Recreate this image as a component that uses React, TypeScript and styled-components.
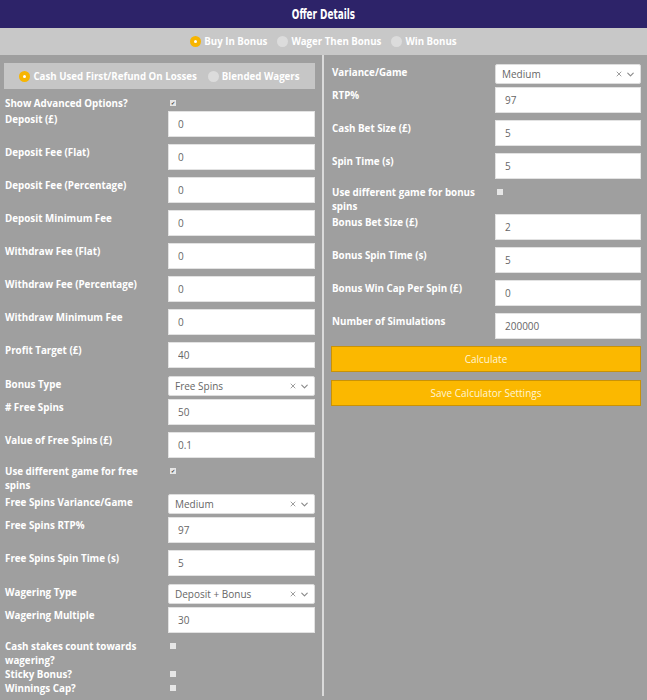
import React from "react";
import styled, { createGlobalStyle } from "styled-components";
import { X, ChevronDown } from "lucide-react";

type Field =
    | { kind: "input"; label: string; value: string }
    | { kind: "select"; label: string; value: string }
    | { kind: "check"; label: string; checked?: boolean };

const leftFields: Field[] = [
    { kind: "check", label: "Show Advanced Options?", checked: true },
    { kind: "input", label: "Deposit (£)", value: "0" },
    { kind: "input", label: "Deposit Fee (Flat)", value: "0" },
    { kind: "input", label: "Deposit Fee (Percentage)", value: "0" },
    { kind: "input", label: "Deposit Minimum Fee", value: "0" },
    { kind: "input", label: "Withdraw Fee (Flat)", value: "0" },
    { kind: "input", label: "Withdraw Fee (Percentage)", value: "0" },
    { kind: "input", label: "Withdraw Minimum Fee", value: "0" },
    { kind: "input", label: "Profit Target (£)", value: "40" },
    { kind: "select", label: "Bonus Type", value: "Free Spins" },
    { kind: "input", label: "# Free Spins", value: "50" },
    { kind: "input", label: "Value of Free Spins (£)", value: "0.1" },
    { kind: "check", label: "Use different game for free spins", checked: true },
    { kind: "select", label: "Free Spins Variance/Game", value: "Medium" },
    { kind: "input", label: "Free Spins RTP%", value: "97" },
    { kind: "input", label: "Free Spins Spin Time (s)", value: "5" },
    { kind: "select", label: "Wagering Type", value: "Deposit + Bonus" },
    { kind: "input", label: "Wagering Multiple", value: "30" },
    { kind: "check", label: "Cash stakes count towards wagering?" },
    { kind: "check", label: "Sticky Bonus?" },
    { kind: "check", label: "Winnings Cap?" },
];

const rightFields: Field[] = [
    { kind: "select", label: "Variance/Game", value: "Medium" },
    { kind: "input", label: "RTP%", value: "97" },
    { kind: "input", label: "Cash Bet Size (£)", value: "5" },
    { kind: "input", label: "Spin Time (s)", value: "5" },
    { kind: "check", label: "Use different game for bonus spins" },
    { kind: "input", label: "Bonus Bet Size (£)", value: "2" },
    { kind: "input", label: "Bonus Spin Time (s)", value: "5" },
    { kind: "input", label: "Bonus Win Cap Per Spin (£)", value: "0" },
    { kind: "input", label: "Number of Simulations", value: "200000" },
];

const GlobalStyle = createGlobalStyle`
    html, body {
        margin: 0;
        padding: 0;
        background: #9f9f9f;
        font-family: "Open Sans", "Liberation Sans", sans-serif;
    }
    * {
        box-sizing: border-box;
    }
`;

const FieldRow = ({ field }: { field: Field }) => (
    <Row $kind={field.kind}>
        <Label $offset={field.kind === "check" ? 0 : 2}>{field.label}</Label>
        {field.kind === "input" && <TextInput defaultValue={field.value} />}
        {field.kind === "select" && (
            <SelectBox>
                <SelectValue>{field.value}</SelectValue>
                <SelectIcons>
                    <X size={8} strokeWidth={2.5} />
                    <ChevronDown size={11} strokeWidth={2.5} />
                </SelectIcons>
            </SelectBox>
        )}
        {field.kind === "check" && <CheckBox $checked={!!field.checked}>{field.checked ? "✔" : ""}</CheckBox>}
    </Row>
);

const Radio = ({ label, checked }: { label: string; checked?: boolean }) => (
    <RadioOption>
        <RadioDot $checked={!!checked} />
        {label}
    </RadioOption>
);

const App = () => {
    return (
        <Page>
            <GlobalStyle />
            <Header>
                <Title>Offer Details</Title>
            </Header>
            <TypeBar>
                <Radio label="Buy In Bonus" checked />
                <Radio label="Wager Then Bonus" />
                <Radio label="Win Bonus" />
            </TypeBar>
            <Columns>
                <LeftColumn>
                    <ModeBox>
                        <Radio label="Cash Used First/Refund On Losses" checked />
                        <Radio label="Blended Wagers" />
                    </ModeBox>
                    {leftFields.map((f) => (
                        <FieldRow key={f.label} field={f} />
                    ))}
                </LeftColumn>
                <RightColumn>
                    {rightFields.map((f) => (
                        <FieldRow key={f.label} field={f} />
                    ))}
                    <ActionButton>Calculate</ActionButton>
                    <ActionButton>Save Calculator Settings</ActionButton>
                </RightColumn>
            </Columns>
        </Page>
    );
};

export default App;

const Page = styled.div`
    width: 647px;
    min-height: 700px;
    background: #9f9f9f;
`;

const Header = styled.div`
    height: 28px;
    background: #2d2369;
    display: flex;
    align-items: center;
    justify-content: center;
`;

const Title = styled.h1`
    margin: 0;
    color: #ffffff;
    font-family: "DejaVu Sans Condensed", "Liberation Sans Narrow", sans-serif;
    font-weight: 700;
    font-size: 14.5px;
    display: inline-block;
    transform: scaleX(0.68);
`;

const TypeBar = styled.div`
    height: 27px;
    background: #c8c8c8;
    display: flex;
    align-items: center;
    justify-content: center;
    gap: 10px;

    label {
        font-size: 9.7px;
    }
`;

const RadioOption = styled.label`
    display: flex;
    align-items: center;
    gap: 3px;
    color: #ffffff;
    font-weight: 700;
    font-size: 9.7px;
`;

const RadioDot = styled.span<{ $checked: boolean }>`
    width: 11px;
    height: 11px;
    border-radius: 50%;
    background: ${(p) => (p.$checked ? "#f7b500" : "#dcdcdc")};
    display: flex;
    align-items: center;
    justify-content: center;

    &::after {
        content: "";
        width: 3px;
        height: 3px;
        border-radius: 50%;
        background: ${(p) => (p.$checked ? "#ffffff" : "transparent")};
    }
`;

const Columns = styled.div`
    display: flex;
    align-items: stretch;
`;

const LeftColumn = styled.div`
    width: 324px;
    padding: 8px 7px 0 4px;
    border-right: 2px solid #dadada;
`;

const RightColumn = styled.div`
    flex: 1;
    padding: 8px 6px 0 7px;
`;

const ModeBox = styled.div`
    height: 26px;
    margin-bottom: 8px;
    background: #c6c6c6;
    display: flex;
    align-items: center;
    justify-content: center;
    gap: 11px;
`;

const Row = styled.div<{ $kind: Field["kind"] }>`
    display: grid;
    grid-template-columns: 164px 1fr;
    align-items: start;
    padding-top: ${(p) => (p.$kind === "select" ? "1px" : "0")};
    margin-bottom: ${(p) => (p.$kind === "input" ? "7px" : p.$kind === "select" ? "3px" : "0")};
`;

const Label = styled.div<{ $offset: number }>`
    padding: ${(p) => p.$offset}px 0 0 1px;
    max-width: 147px;
    color: #ffffff;
    font-weight: 700;
    font-size: 9.8px;
    line-height: 14px;
`;

const TextInput = styled.input`
    height: 26px;
    width: 100%;
    border: 1px solid #e2e2e2;
    background: #ffffff;
    padding: 0 9px;
    font-family: "Open Sans", sans-serif;
    font-size: 10px;
    color: #666666;
    outline: none;
`;

const SelectBox = styled.div`
    height: 20px;
    background: #ffffff;
    border: 1px solid #dddddd;
    border-radius: 2px;
    padding: 0 4px 0 6px;
    display: flex;
    align-items: center;
    justify-content: space-between;
`;

const SelectValue = styled.span`
    font-size: 10px;
    color: #666666;
`;

const SelectIcons = styled.span`
    display: flex;
    align-items: center;
    gap: 2px;
    color: #8a8a8a;
`;

const CheckBox = styled.span<{ $checked: boolean }>`
    margin: 3px 0 0 2px;
    width: 6px;
    height: 6px;
    background: #e6e6e6;
    color: #444;
    font-size: 5px;
    line-height: 6px;
    text-align: center;
    display: block;
`;

const ActionButton = styled.button`
    display: block;
    width: 100%;
    height: 26px;
    margin-bottom: 8px;
    background: #fbb800;
    border: 1px solid #c99206;
    color: #fff5d6;
    font-family: "Open Sans", sans-serif;
    font-size: 10px;
    cursor: pointer;
`;
